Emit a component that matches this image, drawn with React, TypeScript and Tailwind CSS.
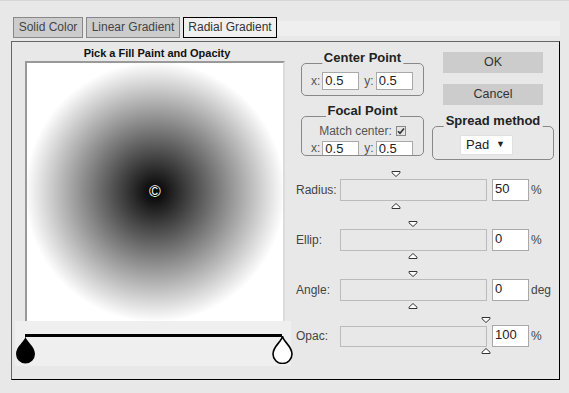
import React from 'react';

const DownMark = () => (
    <svg width="10" height="6" viewBox="0 0 10 6" className="block">
        <path d="M1 0.5 H9 L9 1.8 L5 5.5 L1 1.8 Z" fill="#fff" stroke="#333" strokeWidth="1" strokeLinejoin="round" />
    </svg>
);

const UpMark = () => (
    <svg width="10" height="6" viewBox="0 0 10 6" className="block">
        <path d="M1 5.5 H9 L9 4.2 L5 0.5 L1 4.2 Z" fill="#fff" stroke="#333" strokeWidth="1" strokeLinejoin="round" />
    </svg>
);

const Drop = ({ filled }: { filled: boolean }) => (
    <svg width="21" height="28" viewBox="0 0 21 28" className="block">
        <path
            d="M10.5 0 C10.5 5 1 10 1 18 A9.5 9.5 0 0 0 20 18 C20 10 10.5 5 10.5 0 Z"
            fill={filled ? '#000' : '#fff'}
            stroke="#000"
            strokeWidth={filled ? 0 : 1.6}
        />
    </svg>
);

interface GroupProps {
    title: string;
    className: string;
    children: React.ReactNode;
}

// box with a title sitting on the top border
const Group = ({ title, className, children }: GroupProps) => (
    <div className={`relative border border-[#888] rounded-[5px] ${className}`}>
        <span className="absolute top-[-14px] left-1/2 -translate-x-1/2 px-[2px] bg-[#e8e8e8] text-[13px] leading-[15px] font-bold text-[#222] whitespace-nowrap">
            {title}
        </span>
        {children}
    </div>
);

const inputCls = 'bg-white border border-[#a9a9a9] text-[13px] text-[#222] pl-[2px] outline-none';

interface SliderProps {
    label: string;
    value: string;
    unit: string;
    mark: string;
    trackH: string;
    upGap: string;
}

const SliderRow = ({ label, value, unit, mark, trackH, upGap }: SliderProps) => (
    <div>
        <div className={`h-[6px] ${mark}`}><DownMark /></div>
        <div className="flex items-center mt-[2px]">
            <span className="w-[44px] text-[12px] text-[#444]">{label}</span>
            <div className={`w-[147px] ${trackH} border border-[#bbb] bg-[#e8e8e8]`} />
            <input readOnly value={value} className={`${inputCls} ml-[5px] w-[37px] h-[22px] pb-[4px]`} />
            <span className="ml-[2px] text-[12px] text-[#444]">{unit}</span>
        </div>
        <div className={`h-[6px] ${upGap} ${mark}`}><UpMark /></div>
    </div>
);

const App = () => {
    return (
        <div className="w-[569px] h-[393px] overflow-hidden bg-[#e8e8e8] border-t border-[#d6d6d6] font-['Liberation_Sans',Arial,sans-serif] text-[#444]">
            {/* tabs */}
            <div className="flex items-start mt-[16px] ml-[13px] h-[21px]">
                <div className="w-[70px] h-[21px] leading-[19px] text-center text-[12px] bg-[#cccccc] border border-[#888] text-[#444]">Solid Color</div>
                <div className="ml-[3px] w-[94px] h-[21px] leading-[19px] text-center text-[12px] bg-[#cccccc] border border-[#888] text-[#444]">Linear Gradient</div>
                <div className="ml-[3px] w-[94px] h-[21px] leading-[19px] text-center text-[12px] bg-[#f0f0f0] border border-black text-[#333]">Radial Gradient</div>
                <div className="mt-[4px] w-[283px] h-[15px] bg-[#efefef]" />
            </div>

            {/* main panel */}
            <div className="mt-[3px] ml-[11px] w-[549px] h-[339px] border border-[#666] border-r-black border-b-black flex">
                {/* left: paint picker */}
                <div className="ml-[3px] w-[276px]">
                    <div className="mt-[5px] h-[13px] leading-[13px] pl-[8px] text-center text-[11px] font-bold text-[#111]">
                        Pick a Fill Paint and Opacity
                    </div>
                    <div className="mt-[1px] ml-[10px] w-[260px] h-[260px] border-t-2 border-l-2 border-r-2 border-t-[#999] border-l-[#999] border-r-[#dcdcdc] bg-[radial-gradient(circle_130px_at_50%_50%,#000_0%,#fff_100%)] flex items-center justify-center">
                        <span className="text-white text-[16px] leading-none">©</span>
                    </div>
                    <div className="h-[45px] bg-[#efefef] pt-[13px]">
                        <div className="ml-[10px] w-[257px] h-[3px] bg-black" />
                        <div className="flex justify-between w-[278px] -mt-[1px]">
                            <Drop filled />
                            <Drop filled={false} />
                        </div>
                    </div>
                </div>

                {/* right: settings */}
                <div className="ml-[5px] w-[255px]">
                    <div className="flex items-start h-[115px]">
                        <div className="ml-[5px] mt-[21px]">
                            <Group title="Center Point" className="w-[123px] h-[33px] pt-[8px] pl-[9px]">
                                <div className="flex items-center text-[12px] text-[#555]">
                                    <span>x:</span>
                                    <input readOnly value="0.5" className={`${inputCls} ml-[2px] w-[37px] h-[18px]`} />
                                    <span className="ml-[5px]">y:</span>
                                    <input readOnly value="0.5" className={`${inputCls} ml-[2px] w-[37px] h-[18px]`} />
                                </div>
                            </Group>
                            <Group title="Focal Point" className="mt-[20px] w-[123px] h-[40px] pt-[6px]">
                                <div className="flex items-center justify-center h-[15px] text-[12px] text-[#555]">
                                    <span>Match center:</span>
                                    <span className="ml-[4px] w-[10px] h-[10px] border border-[#888] bg-[#e4e4e4] flex items-center justify-center">
                                        <svg width="8" height="8" viewBox="0 0 8 8">
                                            <path d="M1 4.2 L3 6.3 L7 1.5" fill="none" stroke="#333" strokeWidth="1.6" />
                                        </svg>
                                    </span>
                                </div>
                                <div className="flex items-start mt-[3px] pl-[9px] h-[14px] overflow-hidden text-[12px] text-[#555]">
                                    <span className="leading-[14px]">x:</span>
                                    <input readOnly value="0.5" className={`${inputCls} ml-[2px] w-[37px] h-[18px] pb-[3px]`} />
                                    <span className="ml-[5px] leading-[14px]">y:</span>
                                    <input readOnly value="0.5" className={`${inputCls} ml-[2px] w-[37px] h-[18px] pb-[3px]`} />
                                </div>
                            </Group>
                        </div>
                        <div className="ml-[8px] mt-[7px] w-[122px]">
                            <button className="ml-[11px] w-[100px] h-[21px] bg-[#cccccc] text-[12.5px] text-[#333]">OK</button>
                            <button className="mt-[11px] ml-[11px] w-[100px] h-[21px] bg-[#cccccc] text-[12.5px] text-[#333]">Cancel</button>
                            <Group title="Spread method" className="mt-[21px] w-[122px] h-[34px] pt-[8px] pl-[27px]">
                                <div className="w-[53px] h-[20px] bg-white border border-[#e0e0e0] flex items-center justify-between pl-[5px] pr-[7px] text-[13px] text-[#222]">
                                    <span>Pad</span>
                                    <span className="text-[9px]">▼</span>
                                </div>
                            </Group>
                        </div>
                    </div>

                    <div className="mt-[14px]">
                        <SliderRow label="Radius:" value="50" unit="%" mark="ml-[95px]" trackH="h-[22px]" upGap="mt-[2px]" />
                        <div className="mt-[12px]">
                            <SliderRow label="Ellip:" value="0" unit="%" mark="ml-[112px]" trackH="h-[22px]" upGap="mt-[2px]" />
                        </div>
                        <div className="mt-[12px]">
                            <SliderRow label="Angle:" value="0" unit="deg" mark="ml-[112px]" trackH="h-[22px]" upGap="mt-[2px]" />
                        </div>
                        <div className="mt-[8px]">
                            <SliderRow label="Opac:" value="100" unit="%" mark="ml-[185px]" trackH="h-[21px]" upGap="mt-[1px]" />
                        </div>
                    </div>
                </div>
            </div>
        </div>
    );
};

export default App;
